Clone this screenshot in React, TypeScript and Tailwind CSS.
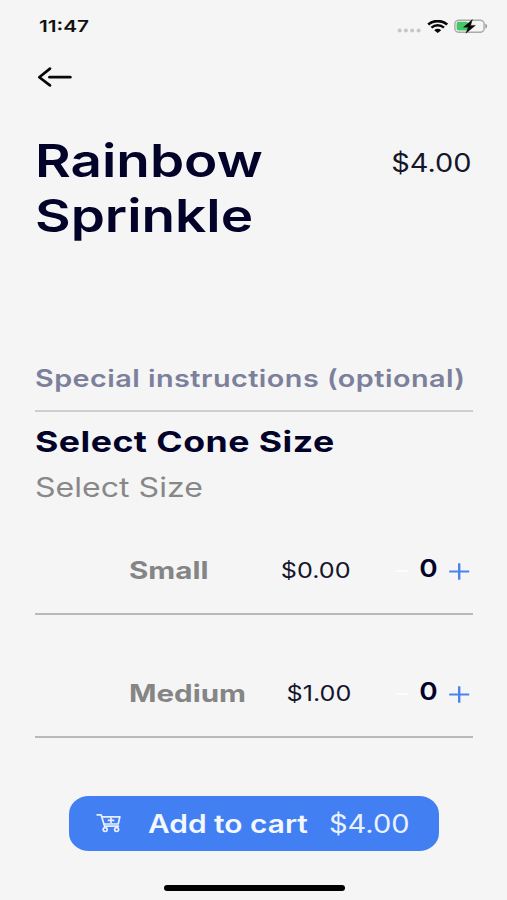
import React from 'react';
import clsx from 'clsx';

interface ConeSize {
  name: string;
  price: string;
  quantity: number;
}

const sizes: ConeSize[] = [
  { name: 'Small', price: '$0.00', quantity: 0 },
  { name: 'Medium', price: '$1.00', quantity: 0 },
];

interface WideProps {
  className?: string;
  children: React.ReactNode;
}

// Extended letterforms: Inter widened along the x axis
const Wide: React.FC<WideProps> = ({ className, children }) => (
  <span className={clsx('inline-block whitespace-nowrap', className)}>{children}</span>
);

const StatusBar: React.FC = () => (
  <header className="flex h-[53px] items-center justify-between pl-[39px] pr-[19px]">
    <Wide className="origin-left scale-x-[1.26] text-[16.5px] font-semibold text-[#111]">11:47</Wide>
    <div className="flex items-center">
      <svg className="mt-[7px] mr-[6px] h-[5px] w-[25px]" viewBox="0 0 25 5" fill="#c6c6c6" aria-hidden="true">
        <ellipse cx="3.6" cy="2.5" rx="2" ry="1.9" />
        <ellipse cx="9.9" cy="2.5" rx="2" ry="1.9" />
        <ellipse cx="16.2" cy="2.5" rx="2" ry="1.9" />
        <ellipse cx="22.6" cy="2.5" rx="2" ry="1.9" />
      </svg>
      <svg className="mr-[6px] h-[13px] w-[21px]" viewBox="0 0 21 13" fill="none" stroke="#080808" aria-hidden="true">
        <path d="M1.2 4.6C6.4-.1 15-.1 20.2 4.6" strokeWidth="2.7" />
        <path d="M4.4 7.7c3.6-3.2 9-3.2 12.6 0" strokeWidth="2.4" />
        <path d="M7.2 10.2c2-1.8 5-1.8 7 0l-3.5 2.8z" fill="#080808" stroke="none" />
      </svg>
      <svg className="h-[15px] w-[34px]" viewBox="0 0 34 15" aria-hidden="true">
        <rect x=".9" y="1.2" width="29.2" height="12" rx="4" ry="3.6" fill="none" stroke="#aaa" strokeWidth="1.4" />
        <path d="M31.3 4.8c2.4.5 2.4 4.3 0 4.8z" fill="#999" />
        <rect x="2.6" y="2.8" width="11.5" height="8.8" rx="2" fill="#45c768" />
        <path d="M18.4.6 9.5 8.2h4.8l-2.4 6 9.5-7.8h-4.8z" fill="#080808" stroke="#080808" strokeWidth=".4" />
      </svg>
    </div>
  </header>
);

const CartIcon: React.FC = () => (
  <svg
    className="h-[20px] w-[25px]"
    viewBox="0 0 25 20"
    fill="none"
    stroke="#e8f0ff"
    strokeWidth="1.7"
    strokeLinecap="round"
    strokeLinejoin="round"
    aria-hidden="true"
  >
    <path d="M1.2.9h4L8.6 12.2h13.8" />
    <path d="M5.9 2.8h18l-1.7 7.2H8" />
    <path d="M15 4.2v4.4M12.4 6.4h5.2" />
    <ellipse cx="9.2" cy="15.6" rx="2" ry="1.9" />
    <ellipse cx="20.6" cy="15.6" rx="2" ry="1.9" />
  </svg>
);

const SizeRow: React.FC<{ size: ConeSize }> = ({ size }) => (
  <li className="flex h-[123px] items-center border-b-2 border-[#b9b9b9] pt-[33px]">
    <div className="w-[190px] pt-[3px] pl-[94px]">
      <Wide className="origin-left scale-x-[1.23] text-[24px] font-bold text-[#858585]">{size.name}</Wide>
    </div>
    <div className="w-[126px] pt-[3px] text-right">
      <Wide className="origin-right scale-x-[1.17] text-[21.5px] text-[#15152b]">{size.price}</Wide>
    </div>
    <div className="ml-[45px] flex items-center">
      <button className="mt-[4px] h-[2px] w-[12px] bg-[#fcfcfc]" aria-label="Remove" />
      <Wide className="-mt-[2px] w-[42px] scale-x-[1.14] pr-px text-center text-[24.5px] font-semibold text-[#03032a]">
        {size.quantity}
      </Wide>
      <button className="-ml-px mt-[5px]" aria-label="Add">
        <svg className="h-[17px] w-[21px]" viewBox="0 0 21 17" stroke="#4a82f0" aria-hidden="true">
          <path d="M.2 8.5h20" strokeWidth="2" />
          <path d="M10.2.3v16.4" strokeWidth="2.4" />
        </svg>
      </button>
    </div>
  </li>
);

const App: React.FC = () => (
  <div
    className={clsx(
      'flex h-[900px] w-[507px] flex-col overflow-hidden bg-[#f5f5f5]',
      "font-['Inter','Liberation_Sans',sans-serif]",
    )}
  >
    <StatusBar />

    <main className="flex flex-col pr-[34px] pl-[35px]">
      <button className="mt-[13px] ml-[2px] h-[22px] w-[36px]" aria-label="Back">
        <svg
          className="h-[22px] w-[36px]"
          viewBox="0 0 36 22"
          fill="none"
          stroke="#080808"
          strokeWidth="2.7"
          strokeLinecap="round"
          strokeLinejoin="round"
        >
          <path d="M13 2.6 2.3 11.2 13 19.4" />
          <path d="M12.5 11.2h20.8" />
        </svg>
      </button>

      <div className="mt-[45px] flex items-start justify-between">
        <h1 className="origin-left scale-x-[1.205] text-[45.5px] leading-[55px] font-semibold text-[#03032a]">
          Rainbow
          <br />
          Sprinkle
        </h1>
        <Wide className="mt-[12px] mr-[2px] origin-right scale-x-[1.155] text-[25px] leading-[37px] text-[#15152b]">$4.00</Wide>
      </div>

      <div className="mt-[112px] flex h-[57px] items-center border-b-2 border-[#cecece] pb-[8px]">
        <Wide className="origin-left scale-x-[1.2] text-[24px] font-semibold tracking-[0.38px] text-[#7c809b]">
          Special instructions (optional)
        </Wide>
      </div>

      <h2 className="mt-[11px] h-[38px] leading-[38px]">
        <Wide className="origin-left scale-x-[1.23] text-[29px] font-bold tracking-[0.38px] text-[#03032a]">
          Select Cone Size
        </Wide>
      </h2>
      <p className="mt-[8px] h-[36px] leading-[36px]">
        <Wide className="origin-left scale-x-[1.21] text-[26.5px] text-[#888]">Select Size</Wide>
      </p>

      <ul className="-mt-[13px]">
        {sizes.map((size) => (
          <SizeRow key={size.name} size={size} />
        ))}
      </ul>
    </main>

    <button className="mt-[58px] ml-[69px] flex h-[55px] w-[370px] items-center rounded-[20px/18px] bg-[#427ff2] pl-[27px]">
      <CartIcon />
      <Wide className="mt-[2px] ml-[27px] w-[181px] origin-left scale-x-[1.195] text-left text-[25px] font-semibold text-[#f3f8ff]">
        Add to cart
      </Wide>
      <Wide className="mt-[2px] origin-left scale-x-[1.16] text-[25px] text-[#e8f1ff]">$4.00</Wide>
    </button>

    <div className="mt-[34px] ml-[164px] h-[6px] w-[181px] rounded-full bg-black" />
  </div>
);

export default App;
